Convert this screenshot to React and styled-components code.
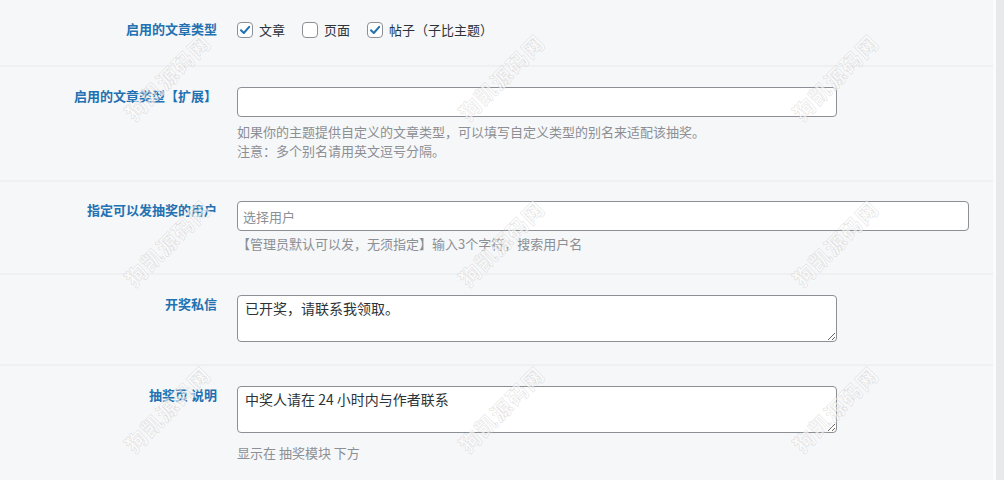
import React from "react";
import styled, { createGlobalStyle } from "styled-components";

const GlobalStyle = createGlobalStyle`
  html, body {
    margin: 0;
    padding: 0;
    background: #f6f7f9;
    font-family: "Noto Sans CJK SC", "Noto Sans", sans-serif;
    font-size: 13px;
    color: #3c434a;
  }
`;

const Page = styled.div`
  position: relative;
  display: flex;
  width: 1004px;
  height: 480px;
  overflow: hidden;
`;

const Panel = styled.div`
  flex: 0 0 993px;
  border-right: 3px solid #fbfbfc;
`;

const Gutter = styled.div`
  flex: 1;
  background: #e8e9ea;
`;

const Row = styled.div`
  display: grid;
  grid-template-columns: 237px 1fr;
  padding: ${(p) => p.$pad || "20px 0"};
  border-bottom: 2px solid #eff0f2;
`;

const Label = styled.div`
  text-align: right;
  padding-right: 20px;
  color: #2271b1;
  font-weight: 700;
  font-size: 13px;
  line-height: 18px;
`;

const Field = styled.div`
  display: flex;
  flex-direction: column;
  align-items: flex-start;
`;

const Options = styled.div`
  display: flex;
  align-items: center;
  gap: 17px;
  padding-top: 1px;
`;

const Option = styled.label`
  display: flex;
  align-items: center;
  gap: 6px;
  font-size: 13px;
  color: #2c3338;
  line-height: 18px;
`;

const Box = styled.span`
  width: 16px;
  height: 16px;
  box-sizing: border-box;
  border: 1px solid #8c8f94;
  border-radius: 4px;
  background: #fff;
  display: flex;
  align-items: center;
  justify-content: center;
`;

const TextInput = styled.input`
  box-sizing: border-box;
  width: ${(p) => p.$w}px;
  height: 30px;
  border: 1px solid #8c8f94;
  border-radius: 4px;
  background: #fff;
  padding: 0 ${(p) => p.$padX || 8}px;
  font-family: inherit;
  font-size: 13px;
  color: #2c3338;
  outline: none;
  &::placeholder {
    color: #8c8f94;
  }
`;

const TextArea = styled.textarea`
  display: block;
  box-sizing: border-box;
  width: 600px;
  height: 47px;
  border: 1px solid #8c8f94;
  border-radius: 4px;
  background: #fff;
  padding: 2px 7px;
  font-family: inherit;
  font-size: 14px;
  line-height: 20px;
  color: #2c3338;
  outline: none;
  resize: vertical;
`;

const Desc = styled.p`
  margin: ${(p) => p.$gap || 5}px 0 0;
  font-size: 13px;
  line-height: 19px;
  color: #8c8f94;
`;

const Overlay = styled.div`
  position: absolute;
  inset: 0;
  pointer-events: none;
  display: grid;
  grid-template-columns: repeat(3, 334px);
  grid-template-rows: repeat(3, 166px);
  transform: translate(0, -6px);
`;

const Stamp = styled.div`
  display: flex;
  align-items: center;
  justify-content: center;
  span {
    display: block;
    transform: rotate(-45deg);
    font-size: 21px;
    font-weight: 700;
    letter-spacing: 1px;
    color: rgba(255, 255, 255, 0.6);
    -webkit-text-stroke: 0.7px rgba(120, 120, 120, 0.2);
    white-space: nowrap;
  }
`;

function Check({ on }) {
  return (
    <Box>
      {on && (
        <svg width="12" height="12" viewBox="0 0 12 12">
          <path d="M2 6.3 L4.8 9 L10.2 2.8" fill="none" stroke="#2271b1" strokeWidth="2" strokeLinecap="round" strokeLinejoin="round" />
        </svg>
      )}
    </Box>
  );
}

const types = [
  { name: "文章", on: true },
  { name: "页面", on: false },
  { name: "帖子（子比主题）", on: true },
];

export default function App() {
  return (
    <>
      <GlobalStyle />
      <Page>
        <Panel>
          <Row $pad="20px 0 26px">
            <Label>启用的文章类型</Label>
            <Options>
              {types.map((t) => (
                <Option key={t.name}>
                  <Check on={t.on} />
                  {t.name}
                </Option>
              ))}
            </Options>
          </Row>
          <Row $pad="20px 0 20px">
            <Label>启用的文章类型【扩展】</Label>
            <Field>
              <TextInput $w={600} defaultValue="" />
              <Desc $gap={5}>
                如果你的主题提供自定义的文章类型，可以填写自定义类型的别名来适配该抽奖。
                <br />
                注意：多个别名请用英文逗号分隔。
              </Desc>
            </Field>
          </Row>
          <Row $pad="19px 0 20px">
            <Label>指定可以发抽奖的用户</Label>
            <Field>
              <TextInput $w={732} $padX={5} placeholder="选择用户" />
              <Desc $gap={3}>【管理员默认可以发，无须指定】输入3个字符，搜索用户名</Desc>
            </Field>
          </Row>
          <Row $pad="20px 0 22px">
            <Label>开奖私信</Label>
            <Field>
              <TextArea defaultValue="已开奖，请联系我领取。" />
            </Field>
          </Row>
          <Row $pad="20px 0 20px">
            <Label>抽奖页 说明</Label>
            <Field>
              <TextArea defaultValue="中奖人请在 24 小时内与作者联系" />
              <Desc $gap={10}>显示在 抽奖模块 下方</Desc>
            </Field>
          </Row>
        </Panel>
        <Gutter />
        <Overlay>
          {Array.from({ length: 9 }).map((_, i) => (
            <Stamp key={i}>
              <span>狗凯源码网</span>
            </Stamp>
          ))}
        </Overlay>
      </Page>
    </>
  );
}
